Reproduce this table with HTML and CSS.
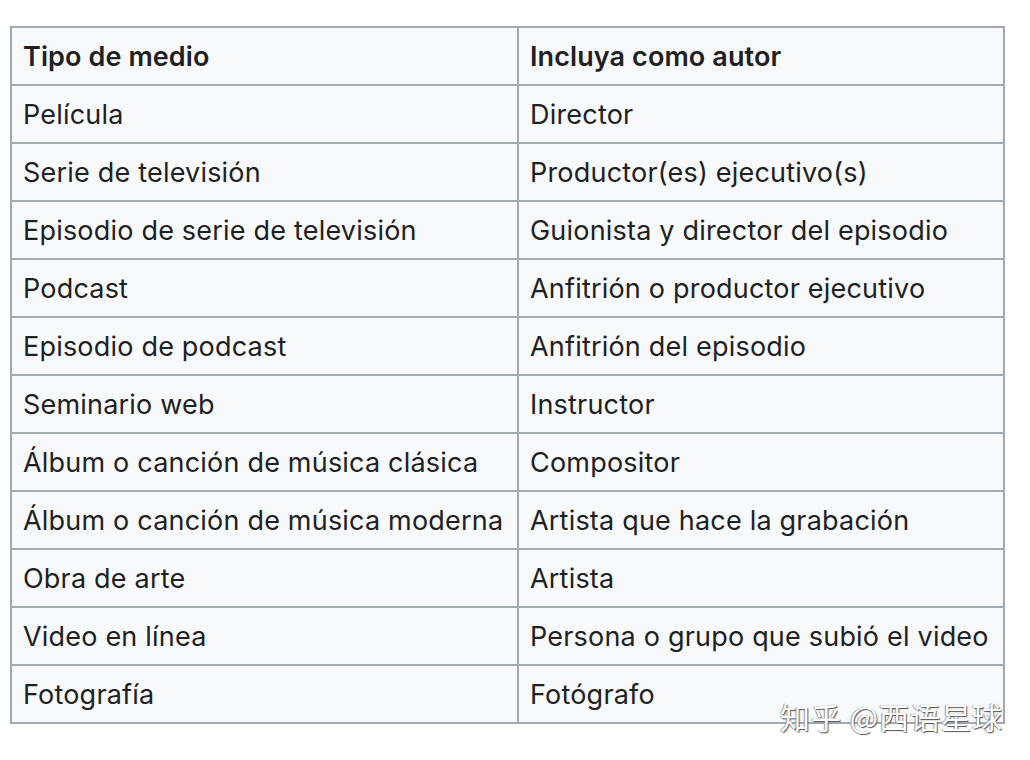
FILE: index.html
```html
<!DOCTYPE html>
<html lang="es">
<head>
<meta charset="utf-8">
<link rel="stylesheet" href="styles.css">
</head>
<body>
<div class="page">
<table class="media">
<thead>
<tr><th class="c1">Tipo de medio</th><th>Incluya como autor</th></tr>
</thead>
<tbody>
<tr><td>Película</td><td>Director</td></tr>
<tr><td>Serie de televisión</td><td>Productor(es) ejecutivo(s)</td></tr>
<tr><td>Episodio de serie de televisión</td><td>Guionista y director del episodio</td></tr>
<tr><td>Podcast</td><td>Anfitrión o productor ejecutivo</td></tr>
<tr><td>Episodio de podcast</td><td>Anfitrión del episodio</td></tr>
<tr><td>Seminario web</td><td>Instructor</td></tr>
<tr><td>Álbum o canción de música clásica</td><td>Compositor</td></tr>
<tr><td>Álbum o canción de música moderna</td><td>Artista que hace la grabación</td></tr>
<tr><td>Obra de arte</td><td>Artista</td></tr>
<tr><td>Video en línea</td><td>Persona o grupo que subió el video</td></tr>
<tr><td>Fotografía</td><td>Fotógrafo</td></tr>
</tbody>
</table>
<div class="watermark">知乎 @西语星球</div>
</div>
</body>
</html>
```
FILE: styles.css
```css
html, body {
  margin: 0;
  padding: 0;
  background: #ffffff;
}
.page {
  position: relative;
  width: 1030px;
  height: 760px;
  padding: 26px 0 0 10px;
  box-sizing: border-box;
}
.media {
  border-collapse: collapse;
  width: 995px;
  background: #f8f9fa;
  font-family: Inter, "Noto Sans", sans-serif;
  font-size: 27px;
  color: #202122;
  table-layout: fixed;
}
.media th, .media td {
  border: 2px solid #a2a9b1;
  height: 56px;
  padding: 0 0 0 11px;
  text-align: left;
  vertical-align: middle;
  white-space: nowrap;
  letter-spacing: 0.2px;
}
.media th {
  font-weight: 600;
  letter-spacing: 0.1px;
}
.media .c1 {
  width: 494px;
}
.watermark {
  position: absolute;
  left: 780px;
  top: 694px;
  font-family: "Noto Sans CJK SC", sans-serif;
  font-size: 30px;
  color: #ffffff;
  text-shadow: 1px 1px 1px #555, -1px 0 1px #999;
  letter-spacing: 1px;
}
```
